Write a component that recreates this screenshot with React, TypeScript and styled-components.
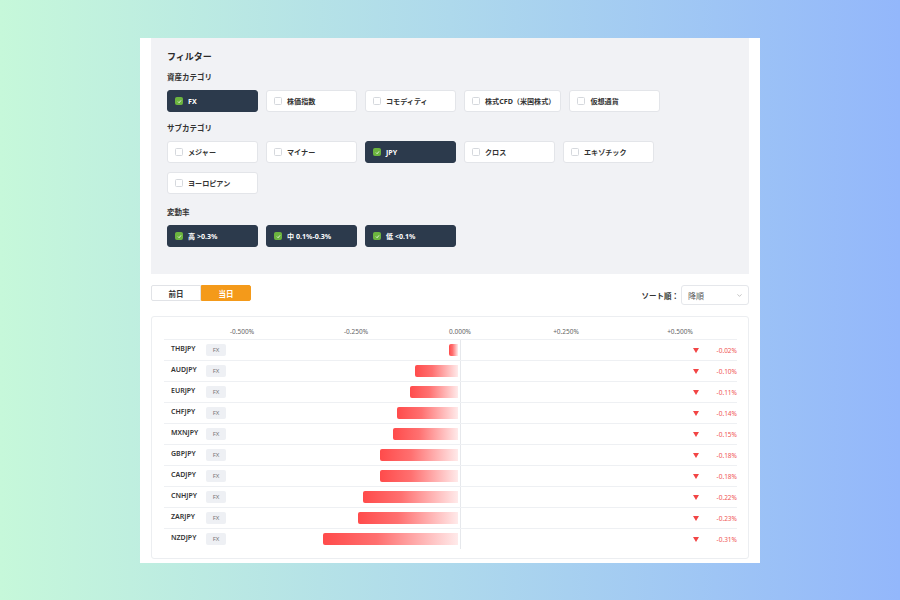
import styled, { createGlobalStyle } from 'styled-components';
import { ChevronDown } from 'lucide-react';

const GlobalStyle = createGlobalStyle`
  html, body {
    margin: 0;
    padding: 0;
  }
  body {
    width: 900px;
    height: 600px;
    overflow: hidden;
    background: linear-gradient(90deg, #c6f8da 0%, #aed9ec 50%, #93b7fb 100%);
    font-family: 'Noto Sans', 'Noto Sans CJK JP', sans-serif;
    color: #333;
  }
`;

const Page = styled.div`
  display: flex;
  justify-content: center;
  padding-top: 38px;
`;

const MainCard = styled.div`
  width: 620px;
  background: #fff;
  padding: 0 11px 4px;
  box-sizing: border-box;
  display: flex;
  flex-direction: column;
`;

const FilterPanel = styled.div`
  background: #f1f2f5;
  padding: 13px 16px 27px;
  display: flex;
  flex-direction: column;
`;

const FilterTitle = styled.div`
  font-size: 9px;
  font-weight: 700;
  line-height: 12px;
  color: #2b2b2b;
  margin-bottom: 8px;
`;

const SectionLabel = styled.div<{ $gap: number }>`
  font-size: 7.5px;
  font-weight: 700;
  line-height: 12px;
  color: #333;
  margin-top: ${({ $gap }) => $gap}px;
  margin-bottom: 7px;
`;

const ChipGrid = styled.div`
  display: flex;
  flex-wrap: wrap;
  gap: 9px 8px;
`;

const Chip = styled.div<{ $on: boolean }>`
  box-sizing: border-box;
  height: 22px;
  min-width: 91px;
  padding: 0 5px 0 7px;
  display: flex;
  align-items: center;
  gap: 5px;
  border-radius: 3px;
  border: 1px solid ${({ $on }) => ($on ? '#2c3a4c' : '#e3e5e9')};
  background: ${({ $on }) => ($on ? '#2c3a4c' : '#fff')};
  color: ${({ $on }) => ($on ? '#fff' : '#333')};
  font-size: 7.1px;
  font-weight: 700;
  white-space: nowrap;
`;

const Box = styled.span<{ $on: boolean }>`
  box-sizing: border-box;
  width: 8px;
  height: 8px;
  border-radius: 1.5px;
  border: 1px solid ${({ $on }) => ($on ? '#6cb43f' : '#d5d8dd')};
  background: ${({ $on }) => ($on ? '#6cb43f' : '#fff')};
  display: flex;
  align-items: center;
  justify-content: center;
  flex: none;
`;

const Toolbar = styled.div`
  display: flex;
  justify-content: space-between;
  align-items: flex-start;
  margin-top: 11px;
`;

const Tabs = styled.div`
  display: flex;
`;

const Tab = styled.div<{ $active: boolean }>`
  box-sizing: border-box;
  width: 50px;
  height: 16px;
  display: flex;
  align-items: center;
  justify-content: center;
  font-size: 7.5px;
  font-weight: 700;
  border: 1px solid ${({ $active }) => ($active ? '#f49a1a' : '#e1e3e7')};
  background: ${({ $active }) => ($active ? '#f49a1a' : '#fff')};
  color: ${({ $active }) => ($active ? '#fff' : '#333')};
  border-radius: ${({ $active }) => ($active ? '0 2px 2px 0' : '2px 0 0 2px')};
`;

const SortGroup = styled.div`
  display: flex;
  align-items: center;
  gap: 2px;
`;

const SortLabel = styled.span`
  font-size: 7.5px;
  font-weight: 700;
  color: #333;
`;

const Select = styled.div`
  box-sizing: border-box;
  width: 68px;
  height: 20px;
  border: 1px solid #e5e7eb;
  border-radius: 3px;
  padding: 0 5px 0 6px;
  display: flex;
  align-items: center;
  justify-content: space-between;
  font-size: 8px;
  color: #555;
`;

const ChartCard = styled.div`
  margin-top: 11px;
  border: 1px solid #eceef1;
  border-radius: 3px;
  padding: 8px 11px 9px 12px;
`;

const Grid = styled.div`
  display: grid;
  grid-template-columns: 42px 24px 460px 1fr;
  align-items: center;
`;

const AxisRow = styled(Grid)`
  height: 14px;
`;

const AxisTrack = styled.div`
  position: relative;
  height: 14px;
`;

const Tick = styled.span`
  position: absolute;
  top: 0;
  line-height: 14px;
  transform: translateX(-50%);
  font-size: 6.5px;
  color: #666;
  white-space: nowrap;
`;

const Row = styled(Grid)`
  height: 21px;
  border-top: 1px solid #eef0f3;
  box-sizing: border-box;
`;

const Symbol = styled.span`
  padding-left: 7px;
  font-size: 7px;
  font-weight: 600;
  color: #333;
  margin-top: -4px;
`;

const Tag = styled.span`
  width: 20px;
  height: 12px;
  border-radius: 2px;
  background: #eef0f4;
  color: #777;
  font-size: 6px;
  display: flex;
  align-items: center;
  justify-content: center;
`;

const Plot = styled.div`
  display: flex;
  height: 100%;
`;

const NegHalf = styled.div`
  width: 230px;
  display: flex;
  justify-content: flex-end;
  align-items: center;
`;

const PosHalf = styled.div`
  flex: 1;
  border-left: 1px solid #e6e8ec;
`;

const Bar = styled.div`
  height: 12px;
  margin-right: 2px;
  border-radius: 2px 0 0 2px;
  background: linear-gradient(90deg, #ff4b4b 0%, #ff7070 40%, rgba(255, 195, 195, 0.35) 100%);
`;

const Change = styled.div`
  display: flex;
  align-items: center;
  justify-content: space-between;
  padding-left: 3px;
`;

const Down = styled.span`
  width: 0;
  height: 0;
  border-left: 3px solid transparent;
  border-right: 3px solid transparent;
  border-top: 5px solid #f24545;
`;

const ChangeText = styled.span`
  font-size: 6.5px;
  color: #f05555;
`;

const Check = () => (
  <svg width="5" height="5" viewBox="0 0 10 10">
    <path d="M2 5.2 L4.2 7.4 L8 2.8" fill="none" stroke="#fff" strokeWidth="1.6" />
  </svg>
);

type ChipItem = { label: string; on?: boolean };

const assets: ChipItem[] = [
  { label: 'FX', on: true },
  { label: '株価指数' },
  { label: 'コモディティ' },
  { label: '株式CFD（米国株式）' },
  { label: '仮想通貨' },
];

const subs: ChipItem[] = [
  { label: 'メジャー' },
  { label: 'マイナー' },
  { label: 'JPY', on: true },
  { label: 'クロス' },
  { label: 'エキゾチック' },
  { label: 'ヨーロピアン' },
];

const vols: ChipItem[] = [
  { label: '高 >0.3%', on: true },
  { label: '中 0.1%-0.3%', on: true },
  { label: '低 <0.1%', on: true },
];

const rows = [
  { s: 'THBJPY', v: -0.02 },
  { s: 'AUDJPY', v: -0.1 },
  { s: 'EURJPY', v: -0.11 },
  { s: 'CHFJPY', v: -0.14 },
  { s: 'MXNJPY', v: -0.15 },
  { s: 'GBPJPY', v: -0.18 },
  { s: 'CADJPY', v: -0.18 },
  { s: 'CNHJPY', v: -0.22 },
  { s: 'ZARJPY', v: -0.23 },
  { s: 'NZDJPY', v: -0.31 },
];

const ticks = [
  { l: '-0.500%', x: 12 },
  { l: '-0.250%', x: 126 },
  { l: '0.000%', x: 230 },
  { l: '+0.250%', x: 336 },
  { l: '+0.500%', x: 450 },
];

const PX_PER_PCT = 434;

const ChipList = ({ items }: { items: ChipItem[] }) => (
  <ChipGrid>
    {items.map((c) => (
      <Chip key={c.label} $on={!!c.on}>
        <Box $on={!!c.on}>{c.on && <Check />}</Box>
        {c.label}
      </Chip>
    ))}
  </ChipGrid>
);

export default function App() {
  return (
    <>
      <GlobalStyle />
      <Page>
        <MainCard>
          <FilterPanel>
            <FilterTitle>フィルター</FilterTitle>
            <SectionLabel $gap={0}>資産カテゴリ</SectionLabel>
            <ChipList items={assets} />
            <SectionLabel $gap={10}>サブカテゴリ</SectionLabel>
            <ChipList items={subs} />
            <SectionLabel $gap={12}>変動率</SectionLabel>
            <ChipList items={vols} />
          </FilterPanel>

          <Toolbar>
            <Tabs>
              <Tab $active={false}>前日</Tab>
              <Tab $active>当日</Tab>
            </Tabs>
            <SortGroup>
              <SortLabel>ソート順：</SortLabel>
              <Select>
                降順
                <ChevronDown size={7} color="#999" strokeWidth={2} />
              </Select>
            </SortGroup>
          </Toolbar>

          <ChartCard>
            <AxisRow>
              <span />
              <span />
              <AxisTrack>
                {ticks.map((t) => (
                  <Tick key={t.l} style={{ left: t.x }}>
                    {t.l}
                  </Tick>
                ))}
              </AxisTrack>
              <span />
            </AxisRow>
            {rows.map((r) => (
              <Row key={r.s}>
                <Symbol>{r.s}</Symbol>
                <Tag>FX</Tag>
                <Plot>
                  <NegHalf>
                    <Bar style={{ width: Math.abs(r.v) * PX_PER_PCT }} />
                  </NegHalf>
                  <PosHalf />
                </Plot>
                <Change>
                  <Down />
                  <ChangeText>{r.v.toFixed(2)}%</ChangeText>
                </Change>
              </Row>
            ))}
          </ChartCard>
        </MainCard>
      </Page>
    </>
  );
}
